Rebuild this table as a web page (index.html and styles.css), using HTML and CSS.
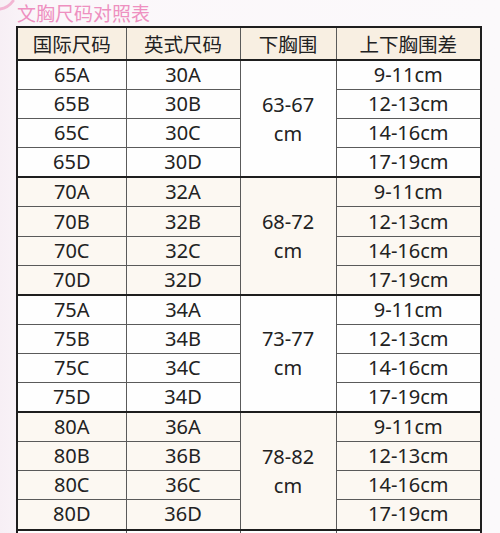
FILE: index.html
```html
<!DOCTYPE html>
<html lang="zh">
<head>
<meta charset="utf-8">
<link rel="stylesheet" href="styles.css">
</head>
<body>
<svg class="swirl" width="20" height="12" viewBox="0 0 20 12"><path d="M0 9 Q8 8 13 1" fill="none" stroke="#f2b6d3" stroke-width="3" stroke-linecap="round"/></svg>
<div class="page">
  <div class="title">文胸尺码对照表</div>
  <table class="size">
    <colgroup><col class="c1"><col class="c2"><col class="c3"><col class="c4"></colgroup>
    <thead>
      <tr><th>国际尺码</th><th>英式尺码</th><th>下胸围</th><th>上下胸围差</th></tr>
    </thead>
    <tbody class="g white">
      <tr><td>65A</td><td>30A</td><td rowspan="4" class="band">63-67<br>cm</td><td>9-11cm</td></tr>
      <tr><td>65B</td><td>30B</td><td>12-13cm</td></tr>
      <tr><td>65C</td><td>30C</td><td>14-16cm</td></tr>
      <tr><td>65D</td><td>30D</td><td>17-19cm</td></tr>
    </tbody>
    <tbody class="g cream">
      <tr><td>70A</td><td>32A</td><td rowspan="4" class="band">68-72<br>cm</td><td>9-11cm</td></tr>
      <tr><td>70B</td><td>32B</td><td>12-13cm</td></tr>
      <tr><td>70C</td><td>32C</td><td>14-16cm</td></tr>
      <tr><td>70D</td><td>32D</td><td>17-19cm</td></tr>
    </tbody>
    <tbody class="g white">
      <tr><td>75A</td><td>34A</td><td rowspan="4" class="band">73-77<br>cm</td><td>9-11cm</td></tr>
      <tr><td>75B</td><td>34B</td><td>12-13cm</td></tr>
      <tr><td>75C</td><td>34C</td><td>14-16cm</td></tr>
      <tr><td>75D</td><td>34D</td><td>17-19cm</td></tr>
    </tbody>
    <tbody class="g cream">
      <tr><td>80A</td><td>36A</td><td rowspan="4" class="band">78-82<br>cm</td><td>9-11cm</td></tr>
      <tr><td>80B</td><td>36B</td><td>12-13cm</td></tr>
      <tr><td>80C</td><td>36C</td><td>14-16cm</td></tr>
      <tr><td>80D</td><td>36D</td><td>17-19cm</td></tr>
    </tbody>
    <tbody class="g white">
      <tr><td>&nbsp;</td><td>&nbsp;</td><td>&nbsp;</td><td>&nbsp;</td></tr>
    </tbody>
  </table>
</div>
</body>
</html>
```
FILE: styles.css
```css
html, body {
  margin: 0;
  padding: 0;
}
body {
  width: 500px;
  height: 533px;
  overflow: hidden;
  background: linear-gradient(to right, #f7eff5 0px, #fbf7fa 40px, #fbf9fb 100%);
  font-family: "Noto Sans", "Noto Sans CJK SC", sans-serif;
  color: #222;
  position: relative;
}
.swirl {
  position: absolute;
  left: 0;
  top: 0;
}
.page {
  padding: 0 0 0 16px;
}
.title {
  font-family: "Noto Sans CJK SC", sans-serif;
  font-size: 19px;
  line-height: 26px;
  height: 26px;
  color: #ee90c0;
  padding-left: 1px;
}
.size {
  border-collapse: collapse;
  table-layout: fixed;
  width: 464px;
  border: 2px solid #1e1e1e;
}
.c1 { width: 109px; }
.c2 { width: 114px; }
.c3 { width: 96px; }
.c4 { width: 145px; }
th, td {
  padding: 0;
  text-align: center;
  border: 1.5px solid #5a5a5a;
}
th {
  height: 31px;
  background: #f8efe2;
  font-family: "Noto Sans CJK SC", sans-serif;
  font-weight: normal;
  font-size: 19.5px;
  line-height: 31px;
  border-bottom: 2px solid #1e1e1e;
}
td {
  height: 28.1px;
  font-size: 20px;
  line-height: 28px;
}
.band {
  line-height: 29px;
}
tbody.g {
  border-bottom: 2px solid #1e1e1e;
}
tbody.white td { background: #fefefe; }
tbody.cream td { background: #fcf8f2; }
```
